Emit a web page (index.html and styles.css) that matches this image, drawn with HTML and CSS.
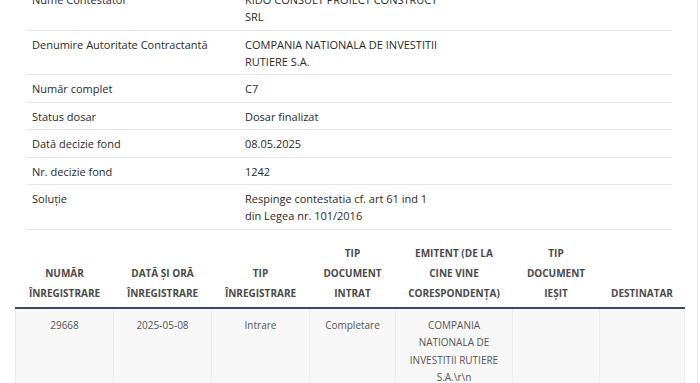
FILE: index.html
```html
<!DOCTYPE html>
<html lang="ro">
<head>
<meta charset="utf-8">
<link rel="stylesheet" href="styles.css">
</head>
<body>
<div class="page">
  <table class="details">
    <tr><td class="label">Nume Contestator</td><td class="value">KIDO CONSULT PROIECT CONSTRUCT<br>SRL</td></tr>
    <tr><td class="label">Denumire Autoritate Contractantă</td><td class="value">COMPANIA NATIONALA DE INVESTITII<br>RUTIERE S.A.</td></tr>
    <tr><td class="label">Număr complet</td><td class="value">C7</td></tr>
    <tr><td class="label">Status dosar</td><td class="value">Dosar finalizat</td></tr>
    <tr><td class="label">Dată decizie fond</td><td class="value">08.05.2025</td></tr>
    <tr><td class="label">Nr. decizie fond</td><td class="value">1242</td></tr>
    <tr><td class="label">Soluție</td><td class="value">Respinge contestatia cf. art 61 ind 1<br>din Legea nr. 101/2016</td></tr>
  </table>

  <table class="registry">
    <colgroup>
      <col class="c98"><col class="c98"><col class="c98"><col class="c86"><col class="c117"><col class="c87"><col class="c85">
    </colgroup>
    <thead>
      <tr>
        <th>Număr<br>Înregistrare</th>
        <th>Dată și oră<br>Înregistrare</th>
        <th>Tip<br>Înregistrare</th>
        <th>Tip<br>document<br>intrat</th>
        <th>Emitent (de la<br>cine vine<br>corespondența)</th>
        <th>Tip<br>document<br>ieșit</th>
        <th>Destinatar</th>
      </tr>
    </thead>
    <tbody>
      <tr>
        <td>29668</td>
        <td>2025-05-08</td>
        <td>Intrare</td>
        <td>Completare</td>
        <td>COMPANIA<br>NATIONALA DE<br>INVESTITII RUTIERE<br>S.A.\r\n</td>
        <td></td>
        <td></td>
      </tr>
    </tbody>
  </table>
</div>
</body>
</html>
```

FILE: styles.css
```css
html, body {
  margin: 0;
  padding: 0;
  background: #fff;
}
body {
  font-family: "Open Sans", "DejaVu Sans", sans-serif;
  color: #333;
  overflow: hidden;
}
.page {
  width: 697px;
  border-right: 1px solid #ececec;
  margin-top: -14px;
  padding-bottom: 40px;
}
.details {
  border-collapse: collapse;
  margin-left: 27px;
  width: 645px;
  font-size: 11px;
  line-height: 17px;
}
.details td {
  padding: 5px 5px 4.5px;
  border-bottom: 1px solid #e6e6e6;
  vertical-align: top;
  color: #2a2a2a;
}
.details .label {
  width: 203px;
}
.registry {
  border-collapse: collapse;
  table-layout: fixed;
  width: 669px;
  margin-left: 15px;
  margin-top: 9px;
  font-size: 10px;
}
.c98 { width: 98px; }
.c86 { width: 86px; }
.c117 { width: 117px; }
.c87 { width: 87px; }
.c85 { width: 85px; }
.registry th {
  text-transform: uppercase;
  font-weight: 700;
  color: #4a4a4a;
  line-height: 20px;
  padding: 4px 2px 4px;
  vertical-align: bottom;
  text-align: center;
  border-bottom: 2px solid #3f4557;
}
.registry td {
  background: #f7f7f7;
  color: #555;
  text-align: center;
  vertical-align: top;
  line-height: 17.5px;
  padding: 8px 2px 20px;
  border-left: 1px solid #ebebeb;
  border-right: 1px solid #ebebeb;
}
```
